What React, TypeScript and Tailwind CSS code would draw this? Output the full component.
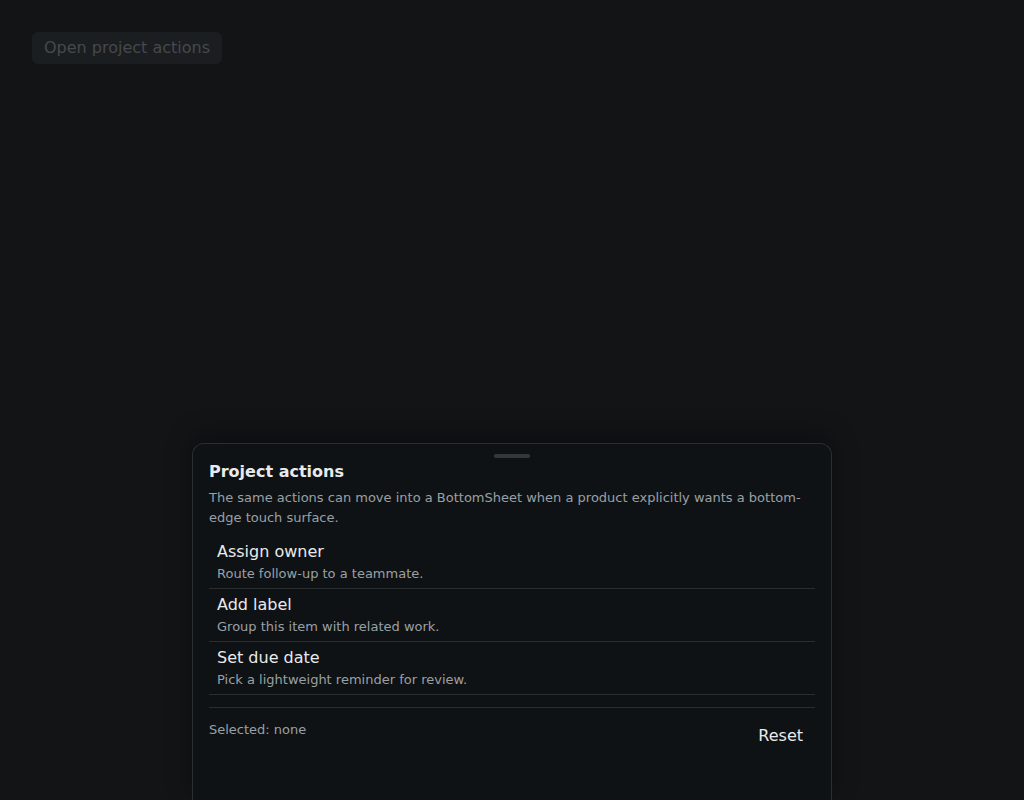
const actions = [
  { title: "Assign owner", detail: "Route follow-up to a teammate." },
  { title: "Add label", detail: "Group this item with related work." },
  { title: "Set due date", detail: "Pick a lightweight reminder for review." },
];

export default function App() {
  return (
    <div className="h-[800px] overflow-hidden bg-[#131416] flex flex-col font-['DejaVu_Sans',sans-serif]">
      <div className="px-8 pt-8">
        <button
          disabled
          className="rounded-md bg-[#1b1e20] px-3 py-1 text-[16px] leading-6 text-[#45494d]"
        >
          Open project actions
        </button>
      </div>

      <div className="mt-auto mx-auto w-[640px] h-[357px] rounded-t-xl border border-b-0 border-[#2a2d31] bg-[#0f1214] px-4 pt-2.5 shadow-[0_-8px_24px_rgba(0,0,0,0.35)]">
        <div className="mx-auto mb-0.5 h-1 w-9 rounded-full bg-[#33373b]" />
        <h2 className="text-[16px] leading-6 font-bold text-[#e8eaed]">Project actions</h2>
        <p className="mt-1 text-[13px] leading-5 text-[#9aa0a6]">
          The same actions can move into a BottomSheet when a product explicitly wants a bottom-edge touch surface.
        </p>

        <ul className="mt-2">
          {actions.map((a) => (
            <li key={a.title} className="border-b border-[#2a2d30] px-2 py-1">
              <div className="text-[16px] leading-6 text-[#e8eaed]">{a.title}</div>
              <div className="text-[13px] leading-5 text-[#9aa0a6]">{a.detail}</div>
            </li>
          ))}
        </ul>

        <div className="mt-3 flex items-start justify-between border-t border-[#2a2d30] pt-3">
          <span className="text-[13px] leading-5 text-[#9aa0a6]">Selected: none</span>
          <button className="rounded-md px-3 py-1 text-[16px] leading-6 text-[#e8eaed]">Reset</button>
        </div>
      </div>
    </div>
  );
}
